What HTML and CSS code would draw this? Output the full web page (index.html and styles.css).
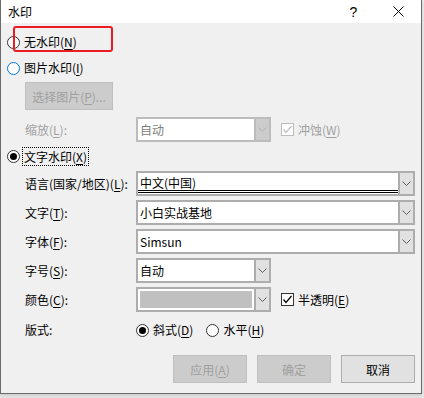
FILE: index.html
```html
<!DOCTYPE html>
<html lang="zh-CN">
<head>
    <meta charset="UTF-8">
    <meta name="viewport" content="width=device-width, initial-scale=1.0">
    <title>水印</title>
    <link rel="stylesheet" href="styles.css">
</head>
<body>

<div class="dialog">
    <div class="titlebar">
        <span class="title">水印</span>
        <span class="help">?</span>
        <span class="close">
            <svg width="11" height="11" viewBox="0 0 11 11"><path d="M0.5 0.5 L10.5 10.5 M10.5 0.5 L0.5 10.5" stroke="#000" stroke-width="1" fill="none"/></svg>
        </span>
    </div>

    <div class="content">
        <div class="choice">
            <span class="radio"></span>
            <span>无水印(<u>N</u>)</span>
        </div>
        <div class="choice">
            <span class="radio hover"></span>
            <span>图片水印(<u>I</u>)</span>
        </div>
        <div class="pic-row">
            <button class="btn off pic-btn">选择图片(<u>P</u>)...</button>
        </div>
        <div class="field off zoom-row">
            <span class="field-label">缩放(<u>L</u>):</span>
            <div class="combo short off">
                <span class="combo-text">自动</span>
                <span class="combo-drop">
                    <svg width="9" height="5" viewBox="0 0 9 5"><polyline points="0.5,0.5 4.5,4.5 8.5,0.5" stroke="#b0b0b0" fill="none"/></svg>
                </span>
            </div>
            <span class="check off">
                <svg width="11" height="11" viewBox="0 0 11 11"><polyline points="1.5,5.5 4,8.5 9.5,2" stroke="#c0c0c0" stroke-width="1.2" fill="none"/></svg>
            </span>
            <span class="check-label">冲蚀(<u>W</u>)</span>
        </div>
        <div class="choice text-row">
            <span class="radio on"></span>
            <span class="focus">文字水印(<u>X</u>)</span>
        </div>

        <div class="field lang-row">
            <span class="field-label">语言(国家/地区)(<u>L</u>):</span>
            <div class="combo">
                <span class="combo-text lang">中文(中国)</span>
                <span class="combo-drop">
                    <svg width="9" height="5" viewBox="0 0 9 5"><polyline points="0.5,0.5 4.5,4.5 8.5,0.5" stroke="#606060" fill="none"/></svg>
                </span>
            </div>
        </div>
        <div class="field">
            <span class="field-label">文字(<u>T</u>):</span>
            <div class="combo">
                <span class="combo-text">小白实战基地</span>
                <span class="combo-drop">
                    <svg width="9" height="5" viewBox="0 0 9 5"><polyline points="0.5,0.5 4.5,4.5 8.5,0.5" stroke="#606060" fill="none"/></svg>
                </span>
            </div>
        </div>
        <div class="field">
            <span class="field-label">字体(<u>F</u>):</span>
            <div class="combo">
                <span class="combo-text">Simsun</span>
                <span class="combo-drop">
                    <svg width="9" height="5" viewBox="0 0 9 5"><polyline points="0.5,0.5 4.5,4.5 8.5,0.5" stroke="#606060" fill="none"/></svg>
                </span>
            </div>
        </div>
        <div class="field">
            <span class="field-label">字号(<u>S</u>):</span>
            <div class="combo short">
                <span class="combo-text">自动</span>
                <span class="combo-drop">
                    <svg width="9" height="5" viewBox="0 0 9 5"><polyline points="0.5,0.5 4.5,4.5 8.5,0.5" stroke="#606060" fill="none"/></svg>
                </span>
            </div>
        </div>
        <div class="field color-row">
            <span class="field-label">颜色(<u>C</u>):</span>
            <div class="combo short">
                <span class="swatch"></span>
                <span class="combo-drop">
                    <svg width="9" height="5" viewBox="0 0 9 5"><polyline points="0.5,0.5 4.5,4.5 8.5,0.5" stroke="#606060" fill="none"/></svg>
                </span>
            </div>
            <span class="check">
                <svg width="11" height="11" viewBox="0 0 11 11"><polyline points="1.5,5.5 4,8.5 9.5,2" stroke="#000" stroke-width="1.2" fill="none"/></svg>
            </span>
            <span class="check-label">半透明(<u>E</u>)</span>
        </div>
        <div class="field layout-row">
            <span class="field-label">版式:</span>
            <span class="radio on"></span>
            <span class="radio-label">斜式(<u>D</u>)</span>
            <span class="radio second"></span>
            <span class="radio-label">水平(<u>H</u>)</span>
        </div>

        <div class="actions">
            <button class="btn off">应用(<u>A</u>)</button>
            <button class="btn off">确定</button>
            <button class="btn">取消</button>
        </div>
    </div>

    <div class="highlight"></div>
</div>

</body>
</html>
```

FILE: styles.css
```css
* {
    box-sizing: border-box;
}
html, body {
    margin: 0;
    padding: 0;
}
body {
    width: 424px;
    height: 398px;
    overflow: hidden;
    background-color: #e9e9e9;
    font-family: "Noto Sans CJK SC", "Microsoft YaHei", sans-serif;
    font-size: 12px;
    line-height: 16px;
    color: #000;
}
u {
    text-underline-offset: 2px;
}
.dialog {
    position: relative;
    width: 422px;
    height: 394px;
    background-color: #f0f0f0;
    border: 1px solid #6b6b6b;
    border-top: none;
    box-shadow: 0 2px 3px rgba(0, 0, 0, 0.12);
}
.titlebar {
    display: flex;
    align-items: center;
    height: 23px;
    padding-left: 7px;
    background-color: #fff;
}
.title {
    flex: 1;
}
.help {
    width: 45px;
    text-align: center;
    font-family: "Liberation Sans", sans-serif;
    font-size: 14px;
}
.close {
    width: 45px;
    display: flex;
    justify-content: center;
    align-items: center;
}
.content {
    padding: 6px 6px 0 6px;
}

/* radio + checkbox */
.choice {
    display: flex;
    align-items: center;
    gap: 4px;
    height: 26px;
}
.radio {
    flex: none;
    width: 13px;
    height: 13px;
    border: 1px solid #333;
    border-radius: 50%;
    background-color: #fff;
    display: flex;
    align-items: center;
    justify-content: center;
}
.radio.hover {
    border-color: #0078d7;
}
.radio.on::after {
    content: "";
    width: 7px;
    height: 7px;
    border-radius: 50%;
    background-color: #000;
}
.text-row {
    height: 24px;
    margin-top: 2px;
}
.focus {
    margin-left: -2px;
    padding: 1px 1px 0;
    border: 1px dotted #000;
}
.check {
    flex: none;
    width: 13px;
    height: 13px;
    margin-left: 10px;
    border: 1px solid #333;
    background-color: #fff;
    display: flex;
    align-items: center;
    justify-content: center;
}
.check.off {
    border-color: #bcbcbc;
}
.check-label {
    margin-left: 4px;
}

/* picture button */
.pic-row {
    padding-left: 18px;
    margin-top: 1px;
}
.pic-btn {
    width: 88px;
}

/* label + combo rows */
.field {
    display: flex;
    align-items: center;
    height: 25px;
    margin-top: 4px;
    padding-left: 18px;
}
.field.off {
    color: #a0a0a0;
}
.zoom-row {
    margin-top: 7px;
}
.lang-row {
    margin-top: 3px;
}
.field-label {
    flex: none;
    width: 111px;
}
.combo {
    flex: 1;
    display: flex;
    height: 25px;
    border: 2px solid #adadad;
    background-color: #fff;
}
.combo.short {
    flex: none;
    width: 135px;
}
.combo.off {
    border-color: #bcbcbc;
}
.combo-text {
    flex: 1;
    display: flex;
    align-items: center;
    padding-left: 2px;
}
.combo.off .combo-text {
    color: #7d7d7d;
}
.combo-text.lang {
    border-bottom: 3px double #000;
    margin-bottom: 1px;
    padding-top: 3px;
}
.combo-drop {
    flex: none;
    width: 15px;
    border-left: 2px solid #adadad;
    background-color: #e1e1e1;
    display: flex;
    align-items: center;
    justify-content: center;
}
.combo.off .combo-drop {
    border-left-color: #bcbcbc;
    background-color: #cccccc;
}
.swatch {
    flex: 1;
    margin: 2px;
    background-color: #c0c0c0;
}
.layout-row {
    height: 26px;
    margin-top: 5px;
}
.radio-label {
    margin-left: 4px;
}
.radio.second {
    margin-left: 13px;
}

/* buttons */
.btn {
    height: 28px;
    padding: 0;
    border: 1px solid #adadad;
    background-color: #e1e1e1;
    font-family: inherit;
    font-size: 12px;
    color: #000;
}
.btn.off {
    border-color: #bfbfbf;
    background-color: #cccccc;
    color: #a0a0a0;
}
.actions {
    display: flex;
    justify-content: flex-end;
    gap: 10px;
    margin-top: 12px;
}
.actions .btn {
    width: 74px;
}

/* red annotation box */
.highlight {
    position: absolute;
    left: 12px;
    top: 26px;
    width: 100px;
    height: 26px;
    border: 2px solid #ec1c24;
    border-radius: 3px;
}
```
